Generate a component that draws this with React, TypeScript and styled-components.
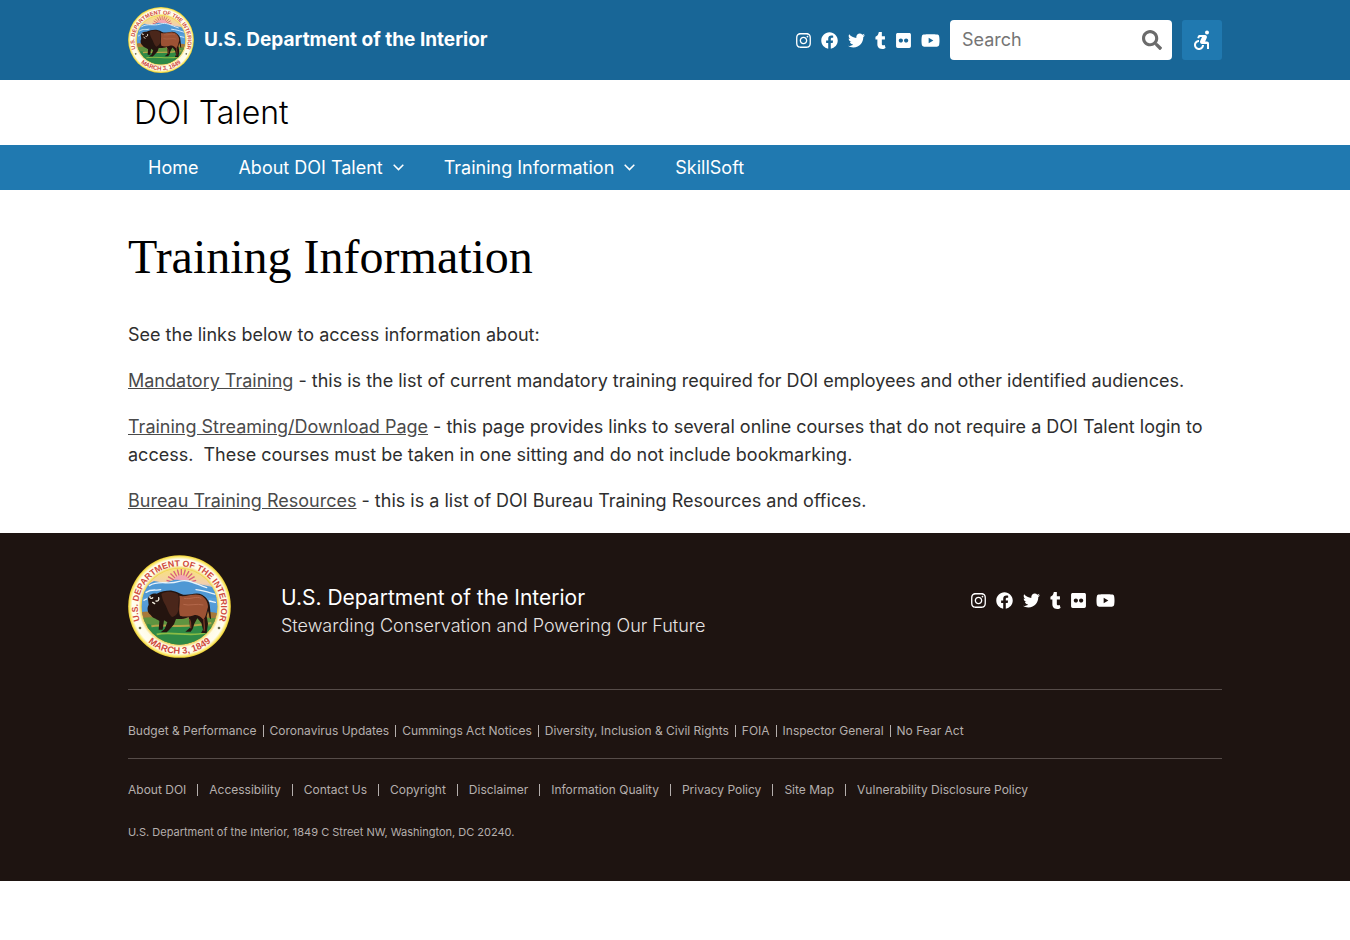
import React from "react";
import styled, { createGlobalStyle } from "styled-components";
import {
  FaInstagram,
  FaFacebook,
  FaTwitter,
  FaTumblr,
  FaFlickr,
  FaYoutube,
  FaSearch,
} from "react-icons/fa";
import { MdAccessibleForward } from "react-icons/md";

const GlobalStyle = createGlobalStyle`
  *, *::before, *::after { box-sizing: border-box; }
  body {
    margin: 0;
    background: #fff;
    color: #2e2e2e;
    font-family: Inter, "Liberation Sans", sans-serif;
    font-size: 18px;
    line-height: 28px;
  }
`;

const Container = styled.div`
  width: 100%;
  max-width: 1126px;
  margin: 0 auto;
  padding: 0 16px;
`;

const TopBar = styled.header`
  background: #186697;
  color: #fff;
`;

const TopBarInner = styled(Container)`
  display: flex;
  flex-wrap: wrap;
  align-items: center;
  justify-content: space-between;
  gap: 10px;
  min-height: 80px;
`;

const Brand = styled.a`
  display: flex;
  align-items: center;
  gap: 10px;
  color: #fff;
  font-size: 19px;
  font-weight: 700;
  text-decoration: none;
`;

const Tools = styled.div`
  display: flex;
  align-items: center;
  gap: 10px;
`;

const SocialList = styled.ul`
  display: flex;
  align-items: center;
  gap: 10px;
  margin: 0;
  padding: 0;
  list-style: none;
`;

const SocialLink = styled.a<{ $width: number }>`
  display: block;
  width: ${(p) => p.$width}px;
  height: 17px;
  color: #fff;

  svg {
    display: block;
    width: 100%;
    height: 100%;
  }
`;

const SearchForm = styled.form`
  display: flex;
  align-items: center;
  width: 222px;
  height: 40px;
  padding: 0 10px 0 12px;
  border-radius: 4px;
  background: #fff;
`;

const SearchInput = styled.input`
  flex: 1;
  min-width: 0;
  padding: 0;
  border: 0;
  outline: 0;
  background: transparent;
  color: #2e2e2e;
  font: inherit;

  &::placeholder {
    color: #757575;
    opacity: 1;
  }
`;

const SearchButton = styled.button`
  display: flex;
  padding: 0;
  border: 0;
  background: transparent;
  color: #6b6b6b;
  font-size: 20px;
  cursor: pointer;
`;

const AccessButton = styled.button`
  display: flex;
  align-items: center;
  justify-content: center;
  width: 40px;
  height: 40px;
  padding: 0;
  border: 0;
  border-radius: 3px;
  background: #2079b0;
  color: #fff;
  font-size: 24px;
  cursor: pointer;
`;

const SiteTitle = styled.div`
  padding: 13px 6px 12px;
  color: #000;
  font-size: 32px;
  font-weight: 300;
  line-height: 40px;
`;

const NavBar = styled.nav`
  background: #2079b0;
`;

const NavList = styled.ul`
  display: flex;
  flex-wrap: wrap;
  margin: 0;
  padding: 0;
  list-style: none;
`;

const NavLink = styled.a`
  display: flex;
  align-items: center;
  gap: 10px;
  height: 45px;
  padding: 0 20px;
  color: #fff;
  text-decoration: none;
`;

const Main = styled.main`
  padding: 38px 0 0;
`;

const Heading = styled.h1`
  margin: 0 0 35px;
  color: #000;
  font-family: "Liberation Serif", serif;
  font-size: 48px;
  font-weight: 400;
  line-height: 58px;
`;

const Paragraph = styled.p`
  margin: 0 0 18px;
`;

const TextLink = styled.a`
  color: #4a4a4a;
  text-decoration: underline;
`;

const Footer = styled.footer`
  padding: 22px 0 35px;
  background: #1e1411;
  color: #fff;
`;

const FooterTop = styled.div`
  display: grid;
  grid-template-columns: 103px 1fr 251px;
  column-gap: 50px;
  padding-bottom: 31px;
`;

const FooterText = styled.div`
  padding-top: 29px;
`;

const FooterName = styled.div`
  font-size: 21px;
`;

const Motto = styled.div`
  color: #e6e3e2;
  font-weight: 300;
`;

const FooterSocial = styled.div`
  padding: 37px 0 0;
`;

const FooterLinks = styled.ul<{ $gap: number; $top: number; $bottom: number }>`
  display: flex;
  flex-wrap: wrap;
  margin: 0;
  padding: ${(p) => p.$top}px 0 ${(p) => p.$bottom}px;
  border-top: 1px solid #564c49;
  list-style: none;
  font-size: 12px;
  line-height: 12px;

  li + li {
    margin-left: ${(p) => p.$gap}px;
    padding-left: ${(p) => p.$gap}px;
    border-left: 1px solid #b5afad;
  }
`;

const FooterLink = styled.a`
  color: #b5afad;
  text-decoration: none;
`;

const Address = styled.p`
  margin: 0;
  color: #b5afad;
  font-size: 11px;
`;

const socials = [
  { name: "Instagram", width: 15, Icon: FaInstagram },
  { name: "Facebook", width: 17, Icon: FaFacebook },
  { name: "Twitter", width: 17, Icon: FaTwitter },
  { name: "Tumblr", width: 11, Icon: FaTumblr },
  { name: "Flickr", width: 15, Icon: FaFlickr },
  { name: "YouTube", width: 19, Icon: FaYoutube },
];

const navItems = [
  { label: "Home", menu: false },
  { label: "About DOI Talent", menu: true },
  { label: "Training Information", menu: true },
  { label: "SkillSoft", menu: false },
];

const agencyLinks = [
  "Budget & Performance",
  "Coronavirus Updates",
  "Cummings Act Notices",
  "Diversity, Inclusion & Civil Rights",
  "FOIA",
  "Inspector General",
  "No Fear Act",
];

const siteLinks = [
  "About DOI",
  "Accessibility",
  "Contact Us",
  "Copyright",
  "Disclaimer",
  "Information Quality",
  "Privacy Policy",
  "Site Map",
  "Vulnerability Disclosure Policy",
];

function Social() {
  return (
    <SocialList>
      {socials.map(({ name, width, Icon }) => (
        <li key={name}>
          <SocialLink href="#" aria-label={name} $width={width}>
            <Icon />
          </SocialLink>
        </li>
      ))}
    </SocialList>
  );
}

function Chevron() {
  return (
    <svg width="11" height="7" viewBox="0 0 11 7" fill="none" stroke="currentColor" strokeWidth="1.5" aria-hidden="true">
      <path d="M0.7 0.8 5.5 5.6 10.3 0.8" />
    </svg>
  );
}

function Seal({ size, id }: { size: number; id: string }) {
  const rays = [-75, -60, -45, -30, -15, 0, 15, 30, 45, 60, 75];
  return (
    <svg width={size} height={size} viewBox="0 0 309 309" aria-hidden="true">
      <defs>
        <clipPath id={`${id}-scene`}>
          <circle cx="154.5" cy="154.5" r="114" />
        </clipPath>
        <linearGradient id={`${id}-sky`} x1="0" y1="0" x2="0" y2="1">
          <stop offset="0" stopColor="#f8e27a" />
          <stop offset="0.2" stopColor="#f3cfae" />
          <stop offset="0.32" stopColor="#5ba3dc" />
          <stop offset="1" stopColor="#3d87cb" />
        </linearGradient>
        <radialGradient id={`${id}-ring`} cx="0.5" cy="0.5" r="0.5">
          <stop offset="0.74" stopColor="#f0d24e" />
          <stop offset="0.8" stopColor="#fffbe6" />
          <stop offset="0.92" stopColor="#fffdf2" />
          <stop offset="0.97" stopColor="#fbe96a" />
          <stop offset="1" stopColor="#e9c92f" />
        </radialGradient>
        <path id={`${id}-top`} d="M 38 204 A 125 125 0 1 1 271 204" />
        <path id={`${id}-bottom`} d="M 20 204 A 144 144 0 0 0 289 204" />
      </defs>
      <circle cx="154.5" cy="154.5" r="154" fill={`url(#${id}-ring)`} />
      <g clipPath={`url(#${id}-scene)`}>
        <rect x="40" y="40" width="230" height="230" fill={`url(#${id}-sky)`} />
        <g stroke="#d9607a" strokeWidth="4">
          {rays.map((angle) => (
            <path key={angle} d="M160 66V42" transform={`rotate(${angle} 160 88)`} />
          ))}
        </g>
        <path d="M136 80a24 20 0 0 1 48 0z" fill="#f3a6b4" />
        <path d="M40 98 78 78 112 84 140 74 180 76 214 88 270 100V128H40Z" fill="#4f98d4" />
        <g fill="none" stroke="#e8f3fb" strokeWidth="4" strokeLinecap="round">
          <path d="M64 92C92 74 120 90 150 80S200 86 236 98" />
          <path d="M54 112C72 100 84 108 98 104M204 104C226 106 242 112 262 118" />
          <path d="M48 136C52 132 54 134 56 132M244 138 262 142" />
        </g>
        <path d="M36 172C70 164 110 178 160 174S240 168 274 176V270H36Z" fill="#a7793a" />
        <path d="M36 190C80 180 130 196 180 190S250 192 274 188V270H36Z" fill="#5f9440" />
        <path d="M58 206C100 222 180 206 256 216V270H58Z" fill="#2f8a45" />
        <path d="M70 214C110 204 150 224 250 204" fill="none" stroke="#b5a548" strokeWidth="6" />
        <path d="M86 238C130 228 180 246 232 234" fill="none" stroke="#8abc45" strokeWidth="5" />
      </g>
      <path
        d="M60 132C62 118 76 114 86 116C100 110 116 106 132 107C146 108 154 116 166 119C184 122 204 110 222 119C238 128 246 142 246 158L249 190C248 196 244 190 243 178L240 168L236 184L240 206L236 234H219L225 224L220 204L208 190L199 206L194 222L188 230H172L186 218L184 196L182 186C166 194 152 192 144 192L138 208L124 224L116 232H98L110 222L118 202L108 196L104 224H92L94 198C84 190 74 190 68 180C58 174 56 158 62 150Z"
        fill="#24140f"
      />
      <path
        d="M154 122C174 128 196 112 218 121C234 129 240 144 240 156C236 170 234 186 226 194C220 186 210 178 200 180C184 186 168 186 156 182C150 164 158 142 154 122Z"
        fill="#9c5234"
      />
      <path
        d="M100 116C116 108 136 108 150 118C156 132 150 146 152 162C150 176 142 184 132 186C120 174 118 158 110 146C104 136 102 124 100 116Z"
        fill="#4a261a"
      />
      <path d="M168 130C188 134 204 122 220 130M166 148C184 154 206 144 226 150" fill="none" stroke="#b3674a" strokeWidth="3" />
      <path d="M184 192C190 202 188 210 188 220M228 192C226 204 232 214 228 228" fill="none" stroke="#7a3d26" strokeWidth="4" />
      <path d="M66 124C64 130 70 132 74 128M92 128C94 134 90 140 84 138M74 142 80 146" fill="none" stroke="#f5efe0" strokeWidth="4" strokeLinecap="round" />
      <g fill="#cf4a3c" fontFamily="'Liberation Sans', sans-serif" fontWeight="700" textAnchor="middle">
        <text fontSize="26">
          <textPath href={`#${id}-top`} startOffset="50%">U.S. DEPARTMENT OF THE INTERIOR</textPath>
        </text>
        <text fontSize="28">
          <textPath href={`#${id}-bottom`} startOffset="50%">MARCH 3, 1849</textPath>
        </text>
      </g>
      <circle cx="36" cy="219" r="4" fill="#6b6a4a" />
      <circle cx="273" cy="219" r="4" fill="#6b6a4a" />
    </svg>
  );
}

export default function App() {
  return (
    <>
      <GlobalStyle />
      <TopBar>
        <TopBarInner>
          <Brand href="#">
            <Seal size={66} id="header-seal" />
            U.S. Department of the Interior
          </Brand>
          <Tools>
            <Social />
            <SearchForm role="search" onSubmit={(e) => e.preventDefault()}>
              <SearchInput type="text" placeholder="Search" aria-label="Search" />
              <SearchButton type="submit" aria-label="Submit search">
                <FaSearch />
              </SearchButton>
            </SearchForm>
            <AccessButton type="button" aria-label="Accessibility options">
              <MdAccessibleForward />
            </AccessButton>
          </Tools>
        </TopBarInner>
      </TopBar>

      <Container>
        <SiteTitle>DOI Talent</SiteTitle>
      </Container>

      <NavBar aria-label="Main">
        <Container>
          <NavList>
            {navItems.map(({ label, menu }) => (
              <li key={label}>
                <NavLink href="#">
                  {label}
                  {menu && <Chevron />}
                </NavLink>
              </li>
            ))}
          </NavList>
        </Container>
      </NavBar>

      <Main>
        <Container>
          <Heading>Training Information</Heading>
          <Paragraph>See the links below to access information about:</Paragraph>
          <Paragraph>
            <TextLink href="#">Mandatory Training</TextLink> - this is the list of current mandatory training required
            for DOI employees and other identified audiences.
          </Paragraph>
          <Paragraph>
            <TextLink href="#">Training Streaming/Download Page</TextLink> - this page provides links to several online
            courses that do not require a DOI Talent login to access.&nbsp; These courses must be taken in one sitting
            and do not include bookmarking.
          </Paragraph>
          <Paragraph>
            <TextLink href="#">Bureau Training Resources</TextLink> - this is a list of DOI Bureau Training Resources
            and offices.
          </Paragraph>
        </Container>
      </Main>

      <Footer>
        <Container>
          <FooterTop>
            <Seal size={103} id="footer-seal" />
            <FooterText>
              <FooterName>U.S. Department of the Interior</FooterName>
              <Motto>Stewarding Conservation and Powering Our Future</Motto>
            </FooterText>
            <FooterSocial>
              <Social />
            </FooterSocial>
          </FooterTop>
          <FooterLinks $gap={6} $top={35} $bottom={21}>
            {agencyLinks.map((label) => (
              <li key={label}>
                <FooterLink href="#">{label}</FooterLink>
              </li>
            ))}
          </FooterLinks>
          <FooterLinks $gap={11} $top={25} $bottom={22}>
            {siteLinks.map((label) => (
              <li key={label}>
                <FooterLink href="#">{label}</FooterLink>
              </li>
            ))}
          </FooterLinks>
          <Address>U.S. Department of the Interior, 1849 C Street NW, Washington, DC 20240.</Address>
        </Container>
      </Footer>
    </>
  );
}
